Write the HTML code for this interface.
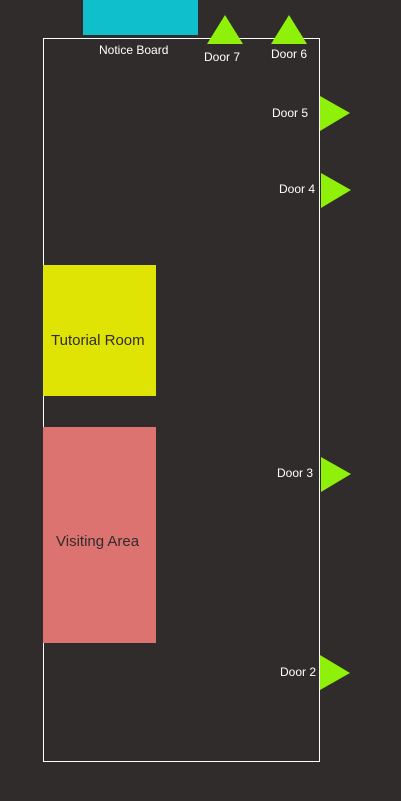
<!DOCTYPE html>
<html><head><style>
body{margin:0;width:401px;height:801px;background:#302c2c;position:relative;overflow:hidden;font-family:"Liberation Sans",sans-serif;}
.a{position:absolute}
.t{position:absolute;color:#fff;font-size:12px;white-space:nowrap}
.r{position:absolute;font-size:15px;color:#302c2c;white-space:nowrap}
</style></head><body>
<div class="a" style="left:83px;top:0;width:115px;height:35px;background:#0fbfcb"></div>
<div class="a" style="left:43px;top:38px;width:275px;height:722px;border:1px solid #fff"></div>
<div class="a" style="left:43px;top:265px;width:113px;height:131px;background:#e0e405"></div>
<div class="a" style="left:43px;top:427px;width:113px;height:216px;background:#dc7370"></div>
<div class="r" style="left:51px;top:332px">Tutorial Room</div>
<div class="r" style="left:56px;top:533px">Visiting Area</div>
<svg class="a" style="left:0;top:0" width="401" height="801">
<g fill="#8ff00a">
<polygon points="225,15 243,44 207,44"/>
<polygon points="289,15 307,44 271,44"/>
<polygon points="320,96 350,113 320,131"/>
<polygon points="321,173 351,190 321,208"/>
<polygon points="321,457 351,474 321,492"/>
<polygon points="320,655 350,673 320,690"/>
</g></svg>
<div class="t" style="left:99px;top:43px">Notice Board</div>
<div class="t" style="left:204px;top:50px">Door 7</div>
<div class="t" style="left:271px;top:47px">Door 6</div>
<div class="t" style="left:272px;top:106px">Door 5</div>
<div class="t" style="left:279px;top:182px">Door 4</div>
<div class="t" style="left:277px;top:466px">Door 3</div>
<div class="t" style="left:280px;top:665px">Door 2</div>
</body></html>
